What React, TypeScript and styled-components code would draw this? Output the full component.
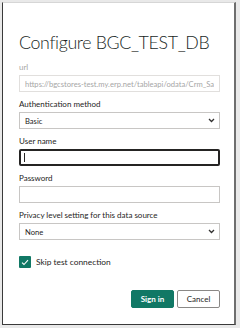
import React, { useState } from 'react'
import styled, { createGlobalStyle } from 'styled-components'

const GlobalStyle = createGlobalStyle`
  html, body {
    margin: 0;
    padding: 0;
    background: #e9e9e9;
  }
  body {
    font-family: Lato, "Open Sans", "Liberation Sans", sans-serif;
  }
`

const Frame = styled.div`
  width: 240px;
  height: 328px;
  box-sizing: border-box;
  padding: 2px 4px 3px 2px;
`

const Dialog = styled.div`
  height: 100%;
  box-sizing: border-box;
  background: #fff;
  border-left: 1px solid #3a3a3a;
  border-bottom: 1px solid #3a3a3a;
  border-right: 2px solid #6e6e6e;
  border-top: 1px solid #d6d6d6;
  padding: 26px 14px 0 16px;
  display: flex;
  flex-direction: column;
`

const Title = styled.h1`
  margin: 0 0 7px;
  font-size: 17.8px;
  font-weight: 300;
  letter-spacing: -0.35px;
  color: #201f1e;
  line-height: 26px;
  white-space: nowrap;
`

const Field = styled.div`
  display: flex;
  flex-direction: column;
  margin-bottom: 7px;
`

const Label = styled.label<{ $disabled?: boolean }>`
  font-size: 8px;
  line-height: 11px;
  color: ${(p) => (p.$disabled ? '#a6a6a6' : '#252423')};
  margin-bottom: 2px;
`

const InputWrap = styled.div`
  position: relative;
`

const Caret = styled.span`
  position: absolute;
  left: 5px;
  top: 4px;
  width: 1px;
  height: 9px;
  background: #252423;
`

const TextBox = styled.input<{ $focused?: boolean }>`
  display: block;
  box-sizing: border-box;
  height: 17px;
  width: 100%;
  margin: 0;
  font-family: inherit;
  font-size: 7.6px;
  padding: 0 5px;
  color: #a6a6a6;
  background: #fff;
  border: ${(p) => (p.$focused ? '2px solid #252423' : '1px solid #c8c6c4')};
  border-radius: ${(p) => (p.$focused ? '2px' : '0')};
  outline: none;
  &:disabled {
    border-color: #e1dfdd;
  }
`

const SelectBox = styled.div`
  box-sizing: border-box;
  height: 17px;
  display: flex;
  align-items: center;
  justify-content: space-between;
  padding: 0 4px 0 5px;
  border: 1px solid #c8c6c4;
  font-size: 7.6px;
  color: #252423;
`

const CheckRow = styled.label`
  display: flex;
  align-items: center;
  gap: 5px;
  margin-top: 9px;
  font-size: 8.4px;
  color: #252423;
`

const CheckBox = styled.span`
  width: 12px;
  height: 12px;
  background: #117865;
  border-radius: 1px;
  display: flex;
  align-items: center;
  justify-content: center;
`

const Buttons = styled.div`
  display: flex;
  justify-content: flex-end;
  gap: 3px;
  margin-top: 22px;
`

const Button = styled.button<{ $primary?: boolean }>`
  width: 43px;
  height: 18px;
  padding: 0;
  font-family: inherit;
  font-size: 8px;
  font-weight: ${(p) => (p.$primary ? 700 : 400)};
  color: ${(p) => (p.$primary ? '#fff' : '#252423')};
  background: ${(p) => (p.$primary ? '#117865' : '#fff')};
  border: 1px solid ${(p) => (p.$primary ? '#117865' : '#8a8886')};
  border-radius: 2px;
`

const Chevron = () => (
  <svg width="7" height="5" viewBox="0 0 7 5">
    <path d="M1 1 L3.5 3.5 L6 1" fill="none" stroke="#323130" strokeWidth="1.3" />
  </svg>
)

const Tick = () => (
  <svg width="8" height="7" viewBox="0 0 8 7">
    <path d="M1 3.6 L3 5.5 L7 1.2" fill="none" stroke="#fff" strokeWidth="1.1" />
  </svg>
)

export default function App() {
  const [user, setUser] = useState('')
  const [pass, setPass] = useState('')

  return (
    <>
      <GlobalStyle />
      <Frame>
        <Dialog>
          <Title>Configure BGC_TEST_DB</Title>
          <Field>
            <Label $disabled>url</Label>
            <TextBox disabled value="https://bgcstores-test.my.erp.net/tableapi/odata/Crm_Sales" readOnly />
          </Field>
          <Field>
            <Label>Authentication method</Label>
            <SelectBox>
              <span>Basic</span>
              <Chevron />
            </SelectBox>
          </Field>
          <Field>
            <Label>User name</Label>
            <InputWrap>
              <TextBox $focused value={user} onChange={(e) => setUser(e.currentTarget.value)} />
              {user === '' && <Caret />}
            </InputWrap>
          </Field>
          <Field>
            <Label>Password</Label>
            <TextBox type="password" value={pass} onChange={(e) => setPass(e.currentTarget.value)} />
          </Field>
          <Field>
            <Label>Privacy level setting for this data source</Label>
            <SelectBox>
              <span>None</span>
              <Chevron />
            </SelectBox>
          </Field>
          <CheckRow>
            <CheckBox>
              <Tick />
            </CheckBox>
            Skip test connection
          </CheckRow>
          <Buttons>
            <Button $primary>Sign in</Button>
            <Button>Cancel</Button>
          </Buttons>
        </Dialog>
      </Frame>
    </>
  )
}
